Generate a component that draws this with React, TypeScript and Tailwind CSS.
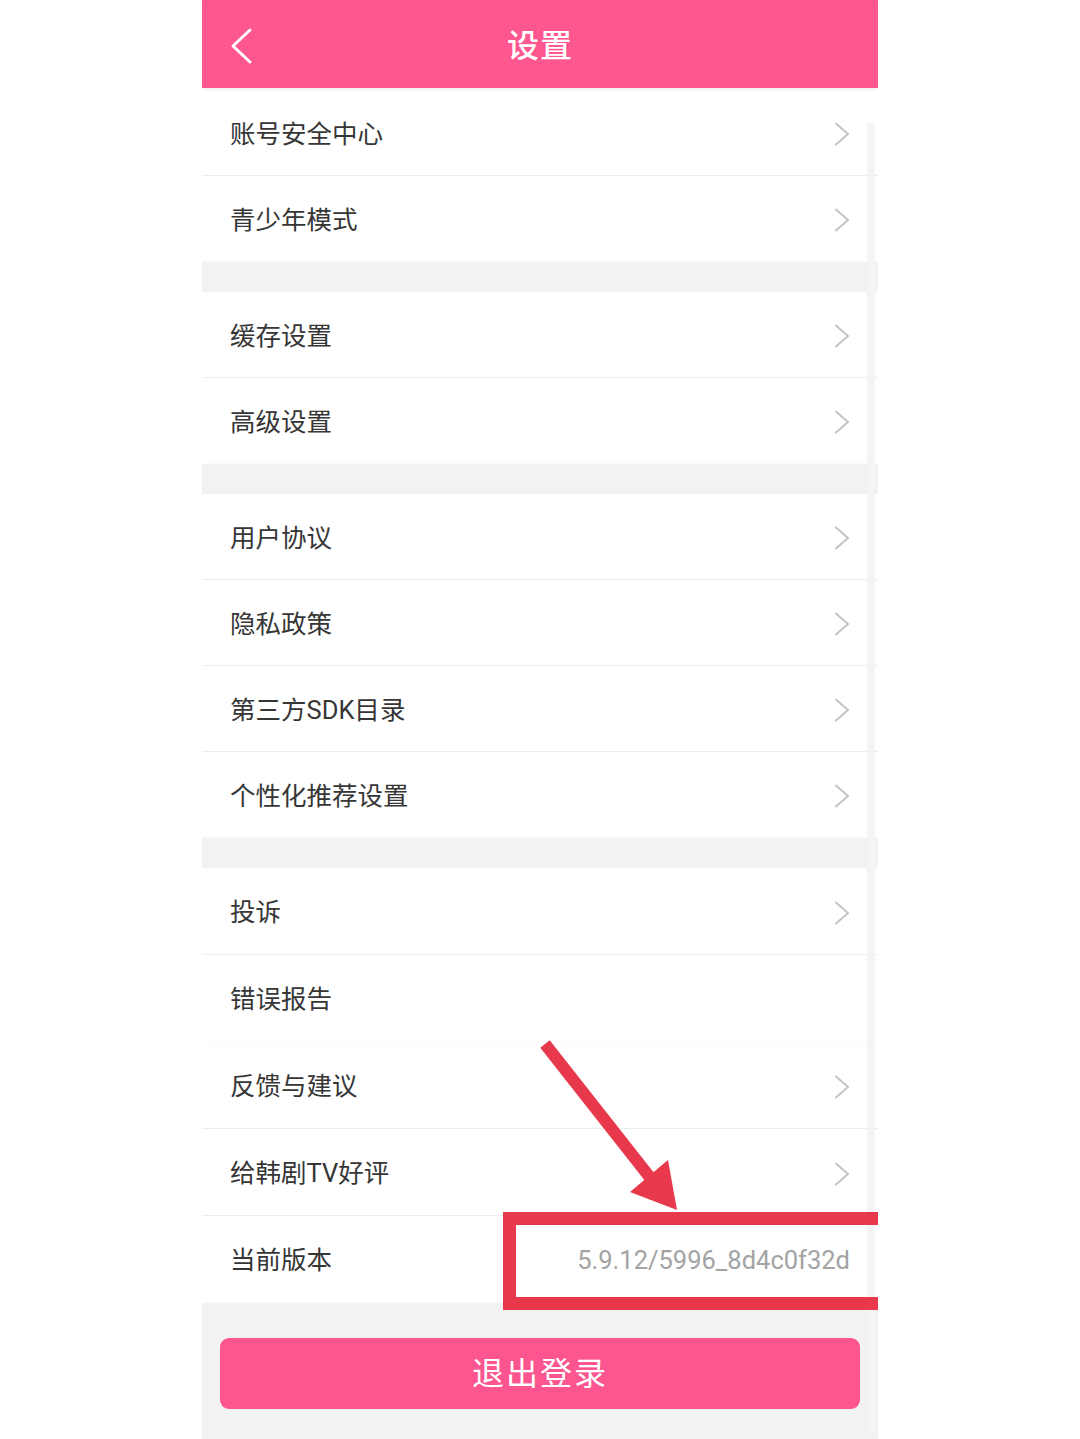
import React from "react";

const font = { fontFamily: "Roboto, 'Noto Sans CJK SC', sans-serif" };

type Row = { label: string; arrow?: boolean; value?: string; line?: boolean };

const sections: { rows: Row[]; h: string }[] = [
  {
    h: "h-[86px]",
    rows: [
      { label: "账号安全中心", arrow: true, line: true },
      { label: "青少年模式", arrow: true },
    ],
  },
  {
    h: "h-[86px]",
    rows: [
      { label: "缓存设置", arrow: true, line: true },
      { label: "高级设置", arrow: true },
    ],
  },
  {
    h: "h-[86px]",
    rows: [
      { label: "用户协议", arrow: true, line: true },
      { label: "隐私政策", arrow: true, line: true },
      { label: "第三方SDK目录", arrow: true, line: true },
      { label: "个性化推荐设置", arrow: true },
    ],
  },
  {
    h: "h-[87px]",
    rows: [
      { label: "投诉", arrow: true, line: true },
      { label: "错误报告" },
      { label: "反馈与建议", arrow: true, line: true },
      { label: "给韩剧TV好评", arrow: true, line: true },
      { label: "当前版本", value: "5.9.12/5996_8d4c0f32d" },
    ],
  },
];

function Chevron() {
  return (
    <svg width="16" height="24" viewBox="0 0 16 24" fill="none">
      <path d="M2 1.5L14 12L2 22.5" stroke="#c4c4c4" strokeWidth="2" strokeLinecap="round" strokeLinejoin="round" />
    </svg>
  );
}

function SettingRow({ row, h }: { row: Row; h: string }) {
  return (
    <div
      className={`${h} flex items-center justify-between pl-[28px] pr-[28px] pt-[3px] bg-white ${
        row.line ? "border-b border-[#ededed]" : "border-b border-[#fafafa]"
      }`}
    >
      <span className="text-[25.5px] text-[#363636]">{row.label}</span>
      {row.arrow && <Chevron />}
      {row.value && <span className="text-[25.5px] text-[#a3a3a3]">{row.value}</span>}
    </div>
  );
}

export default function App() {
  return (
    <div className="relative w-[1080px] h-[1439px] bg-white overflow-hidden" style={font}>
      <div className="mx-auto w-[676px] h-full flex flex-col bg-[#f2f2f2]">
        {/* Title bar */}
        <div className="relative h-[88px] bg-[#fe568e] flex items-center justify-center pt-[4px] shadow-[0_2px_3px_rgba(0,0,0,0.06)] z-10">
          <svg className="absolute left-[26px] top-[27px]" width="26" height="38" viewBox="0 0 26 38" fill="none">
            <path d="M22 3L5 19L22 35" stroke="#ffffff" strokeWidth="3" strokeLinecap="round" strokeLinejoin="round" />
          </svg>
          <span className="text-[32px] font-medium text-white tracking-[1px]">设置</span>
        </div>

        <div className="h-[2px] bg-white" />

        {sections.map((s, i) => (
          <div key={i} className={i > 0 ? "mt-[30px]" : ""}>
            {s.rows.map((r) => (
              <SettingRow key={r.label} row={r} h={s.h} />
            ))}
          </div>
        ))}

        <div className="px-[18px] pt-[35px]">
          <button className="w-full h-[71px] rounded-[9px] bg-[#fd5590] text-white text-[32px] tracking-[2px]">
            退出登录
          </button>
        </div>
      </div>

      {/* scrollbar track */}
      <div className="absolute left-[867px] top-[123px] w-[8px] h-[1310px] bg-[#f4f4f4]" />

      {/* red annotation box */}
      <div className="absolute left-[503px] top-[1212px] w-[375px] h-[98px] border-t-[13px] border-l-[13px] border-b-[13px] border-[#e8384c]" />

      {/* red annotation arrow */}
      <svg className="absolute left-0 top-0" width="1080" height="1439" viewBox="0 0 1080 1439" fill="none">
        <line x1="545" y1="1044" x2="652" y2="1180" stroke="#e8384c" strokeWidth="12" />
        <polygon points="677,1210 630,1192 668,1160" fill="#e8384c" />
      </svg>
    </div>
  );
}
